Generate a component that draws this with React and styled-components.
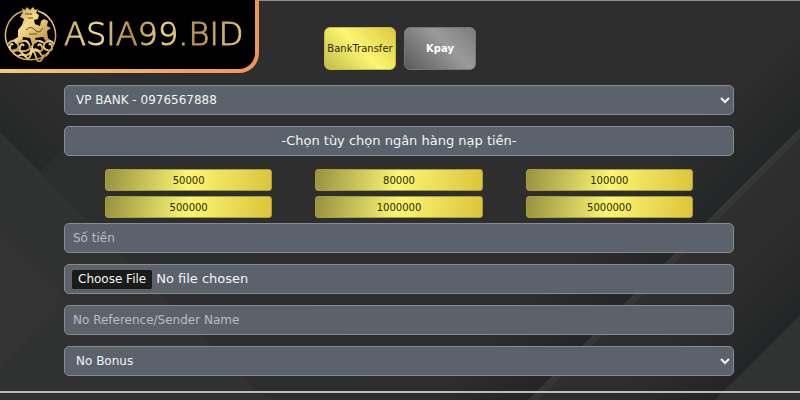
import React, { useState } from 'react';
import styled, { createGlobalStyle } from 'styled-components';

const GlobalStyle = createGlobalStyle`
  * {
    box-sizing: border-box;
  }

  body {
    margin: 0;
    background-color: #2e2e2e;
    font-family: 'DejaVu Sans', 'Noto Sans', sans-serif;
  }
`;

const Page = styled.div`
  position: relative;
  min-height: 100vh;
  overflow: hidden;
`;

const Backdrop = styled.svg`
  position: absolute;
  inset: 0;
  width: 100%;
  height: 100%;
  z-index: -1;
`;

const Header = styled.header`
  display: grid;
  grid-template-columns: 1fr auto 1fr;
  align-items: start;
  background: linear-gradient(#8b9090, #8b9090) top / 100% 1px no-repeat;
`;

const LogoFrame = styled.a`
  justify-self: start;
  padding: 0 4px 4px 0;
  border-bottom-right-radius: 20px;
  background: linear-gradient(90deg, #f3cd70, #f0935c);
  text-decoration: none;
`;

const LogoPanel = styled.span`
  display: flex;
  align-items: center;
  gap: 6px;
  height: 69px;
  padding: 0 12px 2px 4px;
  border-bottom-right-radius: 16px;
  background-color: #000;
`;

const Emblem = styled.svg`
  width: 54px;
  height: 56px;
`;

const Wordmark = styled.span`
  font-size: 32px;
  font-weight: 200;
  line-height: 36px;
  color: transparent;
  background: linear-gradient(100deg, #c9a75a, #f2e3a0 20%, #b08845 38%, #ecd98c 55%, #b78f4c 72%, #e2c878);
  background-clip: text;
  -webkit-text-stroke: 1px transparent;
`;

const Tabs = styled.nav`
  display: flex;
  gap: 8px;
  padding-top: 27px;
`;

const Tab = styled.button`
  width: 72px;
  height: 43px;
  padding: 0;
  border: 1px solid ${props => (props.$active ? '#c9bd45' : '#777')};
  border-radius: 6px;
  font-family: inherit;
  font-size: 10px;
  font-weight: ${props => (props.$active ? 400 : 700)};
  color: ${props => (props.$active ? '#2b2a08' : '#fff')};
  background: ${props =>
    props.$active
      ? 'linear-gradient(45deg, #c2bb49, #fbf573 50%, #dcc83f)'
      : 'linear-gradient(45deg, #5a5a5a, #9a9a9a 60%, #7c7c7c)'};
  cursor: pointer;
`;

const Form = styled.form`
  display: flex;
  flex-direction: column;
  gap: 11px;
  padding: 12px 66px 15px 64px;
`;

const Field = styled.input`
  width: 100%;
  height: 30px;
  padding: 0 8px;
  border: 1px solid #868b91;
  border-radius: 5px;
  background-color: #5c626c;
  font-family: inherit;
  font-size: 12px;
  color: #f4f4f4;

  &::placeholder {
    color: #b9bcc1;
    opacity: 1;
  }
`;

const SelectField = styled(Field).attrs({ as: 'select' })`
  padding: 0 7px;
`;

const FileField = styled(Field)`
  padding: 4px 7px;
  font-size: 13px;
  line-height: 20px;

  &::file-selector-button {
    height: 19px;
    margin: 0 4px 0 0;
    padding: 0 6px;
    border: 0;
    border-radius: 2px;
    background-color: #191a1a;
    font-family: inherit;
    font-size: 12px;
    color: #f4f4f4;
  }
`;

const Notice = styled.div`
  height: 30px;
  border: 1px solid #868b91;
  border-radius: 5px;
  background-color: #5c626c;
  font-size: 13px;
  line-height: 28px;
  text-align: center;
  color: #f4f4f4;
`;

const Amounts = styled.div`
  display: grid;
  grid-template-columns: repeat(3, 1fr);
  gap: 5px 43px;
  margin: 2px 0 -6px;
  padding: 0 41px;
`;

const Amount = styled.button`
  height: 22px;
  padding: 0;
  border: 1px solid #a79f3a;
  border-radius: 3px;
  background: linear-gradient(100deg, #97923f, #fbf573 50%, #dcc43a);
  font-family: inherit;
  font-size: 10px;
  color: #2b2a08;
  cursor: pointer;
`;

const Divider = styled.hr`
  height: 2px;
  margin: 0;
  border: 0;
  background-color: #bdbaba;
`;

const amounts = [50000, 80000, 100000, 500000, 1000000, 5000000];

function App() {
  const [method, setMethod] = useState('BankTransfer');
  const [amount, setAmount] = useState('');

  return (
    <Page>
      <GlobalStyle />
      <Backdrop viewBox="0 0 800 400" preserveAspectRatio="none" aria-hidden="true">
        <defs>
          <linearGradient id="shade-left" gradientUnits="userSpaceOnUse" x1="60" y1="80" x2="4" y2="136">
            <stop offset="0" stopColor="#2e2e2e" />
            <stop offset="1" stopColor="#262728" />
          </linearGradient>
          <linearGradient id="shade-mid" gradientUnits="userSpaceOnUse" x1="410" y1="410" x2="464" y2="464">
            <stop offset="0" stopColor="#2e2e2e" />
            <stop offset="1" stopColor="#242526" />
          </linearGradient>
          <linearGradient id="shade-right" gradientUnits="userSpaceOnUse" x1="500" y1="500" x2="557" y2="557">
            <stop offset="0" stopColor="#2e2e2e" />
            <stop offset="1" stopColor="#242526" />
          </linearGradient>
        </defs>
        <path d="M0 0H60L388 400H268L0 132z" fill="url(#shade-left)" />
        <path d="M40 172 110 102 400 400H268z" fill="#2c2d2d" />
        <path d="M0 132 268 400H0z" fill="#303131" />
        <path d="M0 228 54 282Q62 292 56 308L0 370z" fill="#333333" />
        <path d="M800 0V128L528 400H420z" fill="url(#shade-mid)" />
        <path d="M800 128 528 400H538L800 138z" fill="#343535" />
        <path d="M800 200V315L715 400H600z" fill="url(#shade-right)" />
        <path d="M800 315 715 400H800z" fill="#313232" />
      </Backdrop>
      <Header>
        <LogoFrame href="#" aria-label="ASIA99.BID">
          <LogoPanel>
            <Emblem viewBox="0 0 54 56" aria-hidden="true">
              <defs>
                <linearGradient id="gold" x1="0" y1="0" x2="1" y2="1">
                  <stop offset="0" stopColor="#b98f42" />
                  <stop offset=".4" stopColor="#f5dc8b" />
                  <stop offset="1" stopColor="#b8843c" />
                </linearGradient>
              </defs>
              <path d="M19 5A25 25 0 1 0 34 5" fill="none" stroke="url(#gold)" strokeWidth="1.5" />
              <path
                d="M19 6 18 2 21 4 23 1 26 4 29 1 31 4 34 3 32 7 35 9 34 13 30 14 31 18 36 20 37 15 40 13 44 15 43 20 47 22 43 25 44 32 48 36 43 37 39 31 31 32 33 37 28 38 26 32 19 31 18 36 12 38 9 34 14 31 14 24 18 19 20 13 16 11z"
                fill="url(#gold)"
              />
              <path d="M22 24q5-5 9 0t8-2M21 8h7M24 12h5M25 28h8" fill="none" stroke="#6b4716" strokeWidth="1" />
              <g fill="none" stroke="url(#gold)" strokeWidth="2">
                <path d="M4 38q5-6 9-1t-2 7-5-3 3-2" />
                <path d="M14 37q8-5 11 1t-4 7-5-4 4-1" />
                <path d="M50 38q-5-6-9-1t2 7 5-3-3-2" />
                <path d="M40 37q-8-5-11 1t4 7 5-4-4-1" />
                <path d="M9 46q5-4 9 1t9-1 9 1 9-1" />
                <path d="M14 50q5-3 8 1t5-3 5 3 8-2M27 42v6" />
              </g>
            </Emblem>
            <Wordmark>ASIA99.BID</Wordmark>
          </LogoPanel>
        </LogoFrame>
        <Tabs aria-label="Payment method">
          {['BankTransfer', 'Kpay'].map(name => (
            <Tab key={name} type="button" $active={method === name} onClick={() => setMethod(name)}>
              {name}
            </Tab>
          ))}
        </Tabs>
      </Header>
      <Form>
        <SelectField aria-label="Bank account">
          <option>VP BANK - 0976567888</option>
        </SelectField>
        <Notice id="amount-title">-Chọn tùy chọn ngân hàng nạp tiền-</Notice>
        <Amounts role="group" aria-labelledby="amount-title">
          {amounts.map(value => (
            <Amount key={value} type="button" onClick={() => setAmount(String(value))}>
              {value}
            </Amount>
          ))}
        </Amounts>
        <Field
          type="text"
          aria-label="Số tiền"
          placeholder="Số tiền"
          value={amount}
          onChange={event => setAmount(event.target.value)}
        />
        <FileField type="file" aria-label="Receipt" />
        <Field type="text" aria-label="No Reference/Sender Name" placeholder="No Reference/Sender Name" />
        <SelectField aria-label="Bonus">
          <option>No Bonus</option>
        </SelectField>
      </Form>
      <Divider />
    </Page>
  );
}

export default App;
